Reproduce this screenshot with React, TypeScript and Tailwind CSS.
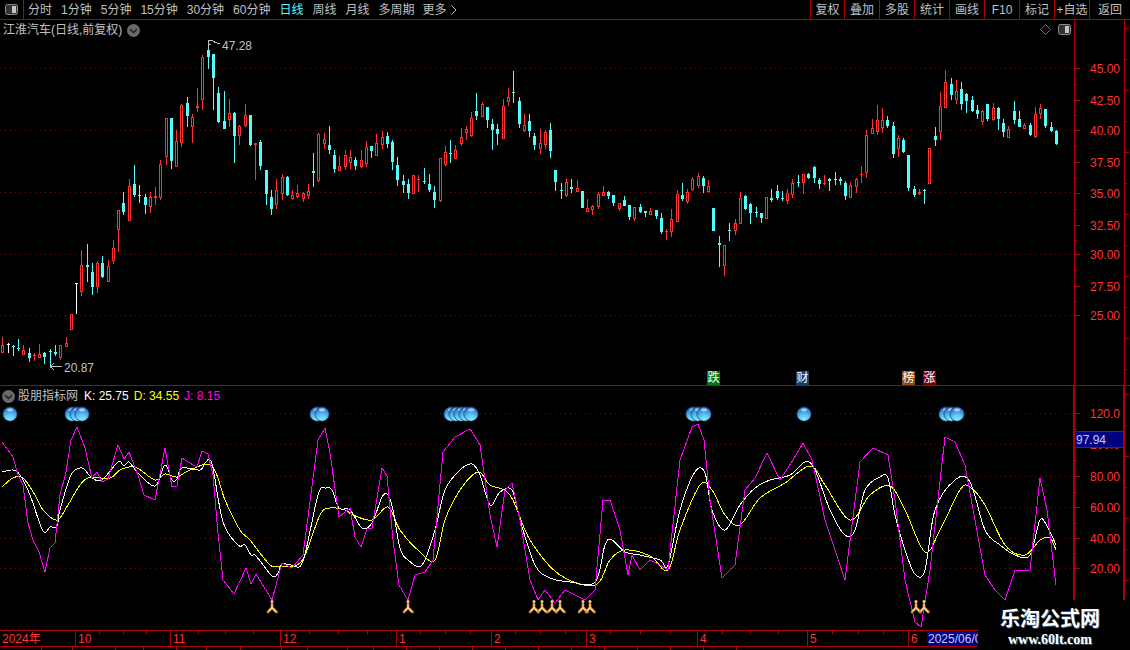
const candles: number[][] = [
  [0,337,345,352,352],[2,343,344,345,352],[1,345,346,347,355],[1,339,348,349,350],[0,345,350,354,354],[1,348,353,357,361],[0,353,355,356,360],[0,344,354,357,357],[1,352,353,356,363],[1,349,351,352,367],
  [1,345,352,354,355],[0,345,345,357,359],[0,337,343,346,346],[0,314,314,329,329],[2,283,283,284,313],[0,250,265,291,295],[1,244,265,267,281],[1,263,272,286,294],[0,261,263,286,292],[1,256,263,276,277],
  [0,260,266,281,281],[0,240,248,260,263],[0,210,210,229,251],[1,192,203,211,214],[0,179,186,220,220],[1,165,184,194,196],[1,185,195,196,202],[1,194,197,204,213],[0,192,197,206,212],[0,187,196,198,204],
  [0,160,164,197,199],[0,118,118,156,164],[1,118,118,160,168],[0,130,141,166,166],[0,104,105,142,146],[1,97,103,115,126],[0,114,117,126,142],[0,88,106,108,111],[0,55,57,99,109],[1,42,50,56,68],
  [1,54,54,77,109],[1,87,93,121,122],[1,91,121,128,128],[0,99,113,119,126],[1,112,113,135,162],[0,125,126,135,144],[0,104,115,125,126],[1,115,115,144,145],[0,143,143,145,179],[1,140,142,165,169],
  [1,170,170,193,204],[1,190,197,208,214],[0,179,190,204,208],[0,174,177,193,199],[1,176,177,194,195],[0,190,195,198,199],[0,185,193,196,197],[0,192,193,198,201],[0,184,191,195,198],[1,153,171,173,186],
  [0,133,134,180,181],[0,133,139,143,148],[1,126,145,149,153],[1,150,155,168,172],[0,156,166,170,170],[0,150,155,166,169],[0,150,157,162,168],[1,157,160,165,169],[0,150,160,166,167],[0,141,147,163,166],
  [1,146,146,150,157],[0,134,143,155,155],[0,131,137,144,148],[1,132,136,143,147],[1,140,142,161,169],[1,157,165,179,185],[1,175,181,184,192],[1,179,184,192,198],[0,175,175,193,193],[0,175,179,180,191],
  [1,168,181,182,183],[1,174,184,189,191],[1,186,192,199,207],[0,158,158,200,201],[0,146,152,164,165],[1,140,153,154,162],[0,145,150,158,158],[0,128,137,143,145],[0,126,129,132,139],[0,112,118,135,136],
  [1,93,111,115,119],[0,102,104,116,116],[1,107,107,119,127],[1,119,124,129,149],[1,124,129,133,144],[0,99,106,138,138],[0,88,97,101,105],[1,71,92,93,102],[1,97,101,123,127],[0,114,125,130,131],
  [1,114,121,130,136],[1,133,136,144,149],[0,129,143,148,153],[0,130,132,144,148],[1,123,130,150,157],[1,170,170,181,190],[1,183,190,191,198],[0,178,182,195,196],[1,179,187,189,192],[0,180,188,191,191],
  [1,191,191,207,207],[0,199,208,211,211],[0,205,206,209,214],[0,192,194,206,208],[0,186,192,195,195],[1,191,192,195,198],[1,195,195,202,205],[0,203,203,208,210],[1,196,200,205,205],[1,205,205,216,219],
  [0,207,207,218,220],[1,204,207,211,212],[1,211,211,213,216],[0,208,211,214,214],[1,210,210,215,218],[1,213,218,231,233],[0,229,231,232,239],[0,209,219,231,236],[0,190,194,221,221],[1,183,195,198,200],
  [0,189,192,201,203],[0,177,179,189,190],[0,173,176,185,187],[1,176,178,185,192],[0,180,186,191,192],[1,208,208,230,230],[1,236,243,245,266],[0,245,245,265,275],[1,223,230,231,240],[0,219,223,230,234],
  [0,192,198,223,223],[1,195,196,208,209],[1,203,204,212,223],[1,207,212,213,216],[1,213,213,217,222],[0,197,197,218,218],[1,189,198,200,201],[1,185,191,197,199],[1,191,198,199,200],[0,189,193,200,203],
  [0,179,183,194,197],[1,175,182,183,186],[0,174,174,182,193],[1,173,174,177,178],[1,166,167,177,182],[1,178,180,183,188],[0,175,183,184,184],[1,178,179,181,190],[1,172,179,180,184],[1,177,179,181,184],
  [1,181,183,195,199],[0,182,185,197,197],[0,178,179,186,192],[0,166,174,175,182],[0,130,135,172,177],[0,119,128,133,133],[0,105,120,131,134],[0,108,120,127,132],[1,116,120,125,127],[1,122,126,153,157],
  [0,135,138,148,156],[1,138,140,151,152],[1,155,155,187,190],[1,186,189,194,196],[0,189,192,194,194],[1,189,190,191,203],[0,148,148,183,183],[1,127,136,139,145],[0,92,106,131,139],[0,70,82,107,107],
  [1,78,84,94,99],[0,80,91,99,103],[1,82,89,103,109],[1,93,94,100,112],[1,96,100,110,111],[1,105,110,113,118],[0,110,111,121,124],[1,104,104,118,120],[0,103,108,119,120],[1,107,108,118,129],
  [1,119,123,131,136],[0,126,129,137,137],[1,101,111,119,123],[1,111,119,126,126],[0,123,125,128,128],[1,123,125,134,135],[0,107,114,136,137],[0,104,108,113,118],[1,109,109,125,127],[1,122,127,130,131],
  [1,130,131,143,144],
];

const jLine = "2,442 13,457 18,475 23,485 28,523 33,540 39,552 45,572 50,548 55,543 60,495 66,472 71,440 77,427 85,448 92,478 97,472 102,482 108,479 118,445 124,459 129,452 138,475 144,495 155,500 165,448 172,487 177,486 182,458 193,465 197,467 202,451 208,454 213,475 218,533 223,580 234,594 246,568 251,584 256,574 272,600 282,563 292,568 297,562 303,555 318,440 325,428 330,453 339,517 350,508 355,537 361,547 367,529 372,528 382,468 387,476 393,540 399,585 408,600 415,575 425,572 433,560 443,452 455,437 470,429 480,445 490,515 497,547 505,490 512,483 520,520 530,580 538,600 545,590 555,603 565,590 585,600 595,590 603,500 610,500 620,530 628,575 632,555 640,570 650,560 660,565 668,570 680,460 692,427 698,424 704,440 710,500 722,578 735,565 745,490 755,478 767,453 780,480 793,460 803,443 812,460 825,520 845,580 860,462 873,448 888,455 895,500 905,580 915,622 921,627 930,570 945,437 955,442 965,465 975,520 985,575 995,590 1005,600 1015,570 1030,570 1040,478 1047,510 1056,585";
const kLine = "2,472 13,470 20,475 30,495 43,531 50,527 57,526 60,510 71,475 80,468 85,470 92,478 102,480 118,462 124,466 129,462 138,473 155,486 165,465 172,480 177,479 182,468 200,470 205,463 212,464 223,522 238,545 245,545 251,555 256,556 272,576 278,573 282,564 292,565 303,561 318,495 326,488 332,490 339,508 350,510 362,528 372,523 382,497 388,495 393,510 400,548 408,560 422,565 435,530 445,490 460,470 472,464 480,475 490,505 500,492 512,490 520,520 535,565 550,578 570,582 595,582 605,545 612,540 625,552 640,555 660,560 668,565 680,510 695,472 705,473 712,510 725,530 740,505 755,488 770,480 790,475 805,462 815,470 830,510 845,535 855,530 865,490 880,477 888,478 895,515 905,550 915,574 925,570 935,510 955,480 970,482 985,530 1000,545 1015,555 1030,555 1040,520 1048,528 1056,545";
const dLine = "2,487 13,478 23,478 35,495 43,510 57,520 68,505 78,488 88,478 110,478 120,470 135,467 155,480 165,474 177,477 190,470 212,466 225,500 240,530 250,540 270,565 280,566 295,566 305,555 320,515 330,508 345,510 353,515 372,520 388,507 400,530 420,552 435,560 445,520 460,490 478,472 490,485 510,495 530,540 560,575 595,585 610,560 625,550 650,556 668,570 680,530 700,485 712,490 725,515 740,525 760,498 785,483 810,466 825,485 850,520 870,495 890,486 905,510 925,552 940,530 960,490 970,487 985,505 1005,545 1025,555 1040,540 1050,538 1056,550";

// rounds the hand-read k/d points into a curve
function smooth(line: string) {
  const p = line.split(" ").map((s) => s.split(",").map(Number));
  let d = `M${p[0][0]} ${p[0][1]}`;
  for (let i = 0; i < p.length - 1; i++) {
    const a = p[Math.max(i - 1, 0)];
    const b = p[i];
    const c = p[i + 1];
    const e = p[Math.min(i + 2, p.length - 1)];
    d += ` C${b[0] + (c[0] - a[0]) / 6} ${b[1] + (c[1] - a[1]) / 6} ${c[0] - (e[0] - b[0]) / 6} ${c[1] - (e[1] - b[1]) / 6} ${c[0]} ${c[1]}`;
  }
  return d;
}

const balls = [10, 72, 77, 82, 317, 322, 451, 456, 461, 466, 471, 693, 698, 704, 804, 946, 951, 957];
const runners = [272, 408, 534, 542, 552, 560, 583, 590, 916, 924];

const leftTools = ["分时", "1分钟", "5分钟", "15分钟", "30分钟", "60分钟", "日线", "周线", "月线", "多周期"];
const rightTools = [
  { name: "复权", w: 34 }, { name: "叠加", w: 35 }, { name: "多股", w: 35 }, { name: "统计", w: 35 }, { name: "画线", w: 35 },
  { name: "F10", w: 35 }, { name: "标记", w: 35 }, { name: "+自选", w: 35 }, { name: "返回", w: 41 },
];
const months = [
  { t: "2024年", w: 75 }, { t: "10", w: 95 }, { t: "11", w: 110 }, { t: "12", w: 116 }, { t: "1", w: 95 },
  { t: "2", w: 95 }, { t: "3", w: 111 }, { t: "4", w: 110 }, { t: "5", w: 101 }, { t: "6", w: 19 },
];
const bottomCells = [42, 31, 43, 28, 33, 30, 34, 41, 26, 40, 26, 33, 33, 33, 33, 33, 33, 33, 33, 33, 33, 33];
const monthTicks = [99, 123, 146, 198, 225, 253, 309, 338, 367, 420, 445, 470, 515, 540, 565, 610, 640, 670, 722, 750, 778, 832, 858, 883];

const priceTicks = [
  { y: 68, t: "45.00" }, { y: 100, t: "42.50" }, { y: 130, t: "40.00" }, { y: 162, t: "37.50" }, { y: 193, t: "35.00" },
  { y: 225, t: "32.50" }, { y: 254, t: "30.00" }, { y: 286, t: "27.50" }, { y: 315, t: "25.00" },
];
const kdjTicks = [
  { y: 413, t: "120.0" }, { y: 444, t: "100.0" }, { y: 476, t: "80.00" }, { y: 507, t: "60.00" }, { y: 538, t: "40.00" }, { y: 568, t: "20.00" },
];

function Candle({ c, i }: { c: number[]; i: number }) {
  const x = Math.round(2.3 + 5.268 * i);
  const color = c[0] === 0 ? "#ff3232" : c[0] === 1 ? "#54fcfc" : "#ffffff";
  const [, hi, top, bot, lo] = c;
  const flat = bot - top <= 2;
  return (
    <g>
      <line x1={x + 0.5} x2={x + 0.5} y1={hi} y2={lo + 1} stroke={color} />
      {flat ? (
        <rect x={x - 1} y={top} width={3} height={Math.max(bot - top, 1)} fill={color} />
      ) : c[0] === 0 ? (
        <rect x={x - 0.5} y={top + 0.5} width={2} height={bot - top} fill="#000" stroke={color} />
      ) : (
        <rect x={x - 1} y={top} width={3} height={bot - top + 1} fill={color} />
      )}
    </g>
  );
}

function Runner({ x }: { x: number }) {
  return (
    <g shapeRendering="geometricPrecision" fill="none" strokeLinecap="round">
      <circle cx={x} cy={601.5} r={1.5} fill="#ffcf8a" stroke="none" />
      <path d={`M${x} 604 L${x} 608 L${x - 4} 612`} strokeWidth={2.6} stroke="#d98a30" />
      <path d={`M${x} 607.5 L${x + 4.5} 612`} strokeWidth={2.6} stroke="#d98a30" />
      <path d={`M${x} 604.5 L${x} 607.5 L${x - 3} 610.5`} strokeWidth={1.2} stroke="#ffd79a" />
      <path d={`M${x + 0.5} 608.5 L${x + 3.5} 611.5`} strokeWidth={1.2} stroke="#ffd79a" />
    </g>
  );
}

function Ball({ x }: { x: number }) {
  return (
    <g shapeRendering="geometricPrecision">
      <circle cx={x} cy={414} r={7.2} fill="url(#ball)" stroke="#0c2a55" strokeWidth={0.6} />
      <ellipse cx={x} cy={409.8} rx={3} ry={1.6} fill="#d4ecff" opacity={0.7} />
    </g>
  );
}

function GreyChevron({ size = 13 }: { size?: number }) {
  return (
    <svg width={size} height={size} viewBox="0 0 13 13">
      <circle cx="6.5" cy="6.5" r="6.5" fill="#6a6a6a" />
      <path d="M3 5.2 L6.5 8.6 L10 5.2" fill="none" stroke="#1c1c1c" strokeWidth="1.4" />
    </svg>
  );
}

function PanelIcon() {
  return (
    <svg width="13" height="11" viewBox="0 0 13 11">
      <rect x="0.5" y="0.5" width="12" height="10" rx="2" fill="#333" stroke="#8a8a8a" />
      <rect x="7" y="2" width="4" height="7" fill="#c4c4c4" />
    </svg>
  );
}

function AxisColumn({ ticks, y0, h }: { ticks: { y: number; t: string }[]; y0: number; h: number }) {
  return (
    <svg className="block" width="50" height={h} viewBox={`1076 ${y0} 50 ${h}`} shapeRendering="crispEdges">
      {ticks.map((k, i) => (
        <g key={k.t}>
          <line x1="1076" x2="1081" y1={k.y + 0.5} y2={k.y + 0.5} stroke="#b00000" />
          {i < ticks.length - 1 && (
            <line x1="1076" x2="1078" y1={(k.y + ticks[i + 1].y) / 2 + 0.5} y2={(k.y + ticks[i + 1].y) / 2 + 0.5} stroke="#b00000" />
          )}
          <text x="1091" y={k.y + 5} fill="#ff3232" className="text-xs">{k.t}</text>
        </g>
      ))}
    </svg>
  );
}

function RightStrip({ h, y0 }: { h: number; y0: number }) {
  const marks = [];
  for (let y = y0 + 8; y < y0 + h; y += 31) marks.push(y);
  return (
    <svg className="block" width="4" height={h} shapeRendering="crispEdges">
      {marks.map((y, i) => (
        <line key={y} x1="0" x2={i % 2 ? 2 : 4} y1={y - y0 + 0.5} y2={y - y0 + 0.5} stroke="#b00000" />
      ))}
    </svg>
  );
}

export default function App() {
  return (
    <div className="relative flex h-[650px] w-[1130px] flex-col overflow-hidden bg-black text-xs text-[#c0c0c0] [font-family:'Liberation_Sans','Noto_Sans_CJK_SC',sans-serif]">
      {/* top toolbar */}
      <div className="flex h-5 shrink-0 items-center border-b border-[#b00000]">
        <div className="flex h-full w-6 items-center justify-center border-r border-[#b00000] pr-px">
          <PanelIcon />
        </div>
        <div className="flex flex-1 items-center gap-[9px] pl-1">
          {leftTools.map((t) => (
            <span key={t} className={t === "日线" ? "text-[#54fcfc]" : ""}>{t}</span>
          ))}
          <span className="-ml-px flex items-center gap-1">
            更多
            <svg width="6" height="10" viewBox="0 0 6 10">
              <path d="M0.5 0.5 L5 5 L0.5 9.5" fill="none" stroke="#c0c0c0" />
            </svg>
          </span>
        </div>
        <div className="flex h-full">
          {rightTools.map((b) => (
            <div key={b.name} style={{ width: b.w }} className="flex h-full items-center justify-center border-l border-[#b00000]">
              {b.name}
            </div>
          ))}
        </div>
      </div>

      {/* price pane */}
      <div className="flex h-[366px] shrink-0 border-b border-[#b00000]">
        <div className="relative w-[1075px] shrink-0 border-r border-[#b00000]">
          <svg className="block" width="1075" height="365" viewBox="0 20 1075 365" shapeRendering="crispEdges">
            {[68, 130, 192, 254, 315].map((y) => (
              <line key={y} x1="0" x2="1075" y1={y + 0.5} y2={y + 0.5} stroke="#8c0000" strokeDasharray="1 4" />
            ))}
            {candles.map((c, i) => (
              <Candle key={i} c={c} i={i} />
            ))}
            <path d="M208.5 50 V40.5 H213 M208 44.5 H211 M213 41.5 L220 44" fill="none" stroke="#c0c0c0" />
            <path d="M50.5 366.5 H62 M50.5 366.5 L54 363 M50.5 366.5 L54 370" fill="none" stroke="#c0c0c0" />
            <text x="222" y="50" fill="#c0c0c0" className="text-xs">47.28</text>
            <text x="64" y="372" fill="#c0c0c0" className="text-xs">20.87</text>
          </svg>
          <div className="absolute left-[3px] top-[2px] flex items-center gap-[5px]">
            <span>江淮汽车(日线,前复权)</span>
            <GreyChevron />
          </div>
          <div className="absolute right-[3px] top-[4px] flex items-center gap-[7px]">
            <svg width="11" height="11" viewBox="0 0 11 11">
              <path d="M5.5 0.5 L10.5 5.5 L5.5 10.5 L0.5 5.5 Z" fill="none" stroke="#707070" />
            </svg>
            <PanelIcon />
          </div>
          <div className="absolute bottom-0 left-[707px] flex h-[14px] w-[13px] items-center justify-center bg-[#007a10] text-white">跌</div>
          <div className="absolute bottom-0 left-[796px] flex h-[14px] w-[13px] items-center justify-center bg-[#103f70] text-white">财</div>
          <div className="absolute bottom-0 left-[902px] flex h-[14px] w-[13px] items-center justify-center bg-[#8a4f10] text-white">榜</div>
          <div className="absolute bottom-0 left-[923px] flex h-[14px] w-[13px] items-center justify-center bg-[#800000] text-white">涨</div>
        </div>
        <div className="w-[50px] shrink-0 border-r border-[#b00000]">
          <AxisColumn ticks={priceTicks} y0={20} h={365} />
        </div>
        <RightStrip h={365} y0={20} />
      </div>

      {/* KDJ pane */}
      <div className="flex h-[244px] shrink-0">
        <div className="relative w-[1075px] shrink-0 border-r-2 border-[#b00000]">
          <svg className="block" width="1075" height="244" viewBox="0 386 1075 244" shapeRendering="crispEdges">
            <defs>
              <radialGradient id="ball" cx="50%" cy="95%" r="90%">
                <stop offset="0%" stopColor="#8ff0ff" />
                <stop offset="45%" stopColor="#5cc4f8" />
                <stop offset="100%" stopColor="#2468c0" />
              </radialGradient>
            </defs>
            {kdjTicks.map((k) => (
              <line key={k.y} x1="0" x2="1075" y1={k.y + 0.5} y2={k.y + 0.5} stroke="#8c0000" strokeDasharray="1 4" />
            ))}
            <path d={smooth(dLine)} fill="none" stroke="#ffff00" />
            <path d={smooth(kLine)} fill="none" stroke="#ffffff" />
            <polyline points={jLine} fill="none" stroke="#ff00ff" />
            {balls.map((x) => (
              <Ball key={x} x={x} />
            ))}
            {runners.map((x) => (
              <Runner key={x} x={x} />
            ))}
          </svg>
          <div className="absolute left-[2px] top-[2px] flex items-center">
            <GreyChevron />
            <span className="ml-[3px]">股朋指标网</span>
            <span className="ml-1.5 text-white">K: 25.75</span>
            <span className="ml-[5px] text-[#ffff00]">D: 34.55</span>
            <span className="ml-[5px] text-[#ff00ff]">J: 8.15</span>
          </div>
        </div>
        <div className="relative w-[50px] shrink-0 border-r-2 border-[#b00000]">
          <AxisColumn ticks={kdjTicks} y0={386} h={244} />
          <div className="absolute left-0 right-0 top-[45px] flex h-[17px] items-center border-y border-[#b00000] bg-[#000080] pl-px text-[#c8c8ff]">97.94</div>
        </div>
        <RightStrip h={244} y0={386} />
      </div>

      {/* time axis */}
      <div className="relative flex h-[17px] shrink-0 border-y border-[#b00000] text-[#ff3232]">
        {months.map((m, i) => (
          <div key={m.t} style={{ width: m.w }} className={`flex items-center pl-[2px] ${i ? "border-l border-[#b00000]" : ""}`}>
            {m.t}
          </div>
        ))}
        <div className="flex w-[51px] items-center overflow-hidden whitespace-nowrap bg-[#000080] pl-px text-[#c8c8ff]">2025/06/06</div>
        <svg className="absolute left-0 top-0" width="900" height="3" shapeRendering="crispEdges">
          {monthTicks.map((x) => (
            <line key={x} x1={x + 0.5} x2={x + 0.5} y1="0" y2="3" stroke="#b00000" />
          ))}
        </svg>
      </div>

      {/* cropped tab row under the axis */}
      <div className="flex flex-1 overflow-hidden">
        {bottomCells.map((w, i) => (
          <div key={i} style={{ width: w }} className="h-full shrink-0 border-r border-[#b00000]" />
        ))}
      </div>

      {/* site watermark over the corner */}
      <div className="absolute bottom-0 right-0 flex h-[50px] w-[152px] flex-col items-center bg-black pt-[7px] pr-[8px] text-white">
        <div className="text-xl leading-[24px] font-bold [text-shadow:1px_1px_0_#33507a]">乐淘公式网</div>
        <div className="mt-[1px] text-sm leading-[16px] font-bold [font-family:'Liberation_Serif',serif] [text-shadow:1px_1px_0_#33507a]">www.60lt.com</div>
      </div>
    </div>
  );
}
